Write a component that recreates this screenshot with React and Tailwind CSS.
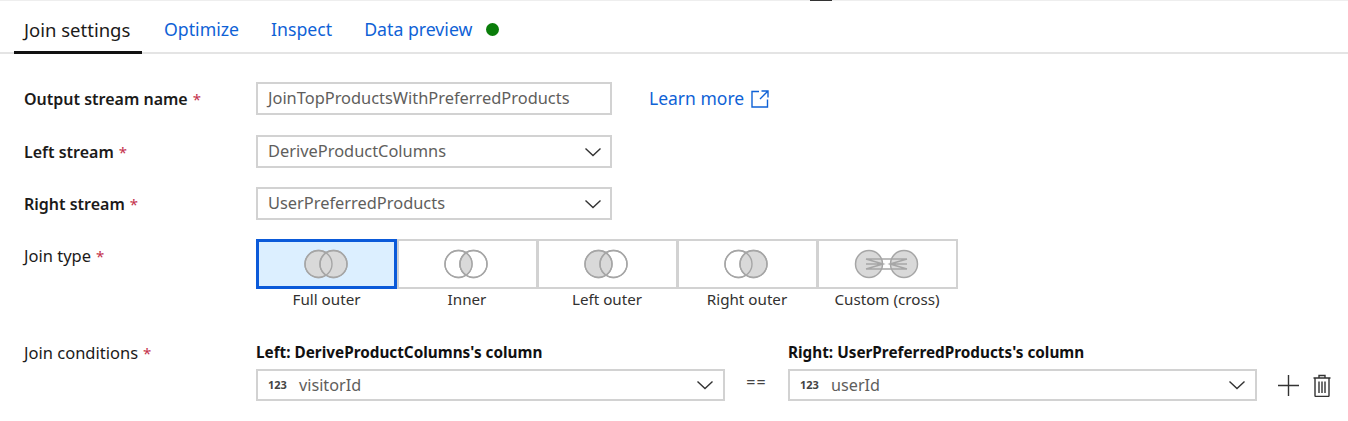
const joinTypes = [
  { label: 'Full outer', kind: 'full', selected: true },
  { label: 'Inner', kind: 'inner' },
  { label: 'Left outer', kind: 'left' },
  { label: 'Right outer', kind: 'right' },
  { label: 'Custom (cross)', kind: 'cross' },
];

const Chevron = ({ className }) => (
  <svg viewBox="0 0 18 10" className={className} fill="none" stroke="#333" strokeWidth="1.4">
    <path d="M1.5 1.5 9 8.5l7.5-7" />
  </svg>
);

const Required = () => <span className="ml-[5px] text-[15px] font-normal text-[#c4314b]">*</span>;

// Venn diagram, circles sit 15px apart in a 60x30 box
const JoinIcon = ({ kind }) => {
  const line = '#a6a6a6';
  const fill = '#d9d9d9';
  if (kind === 'cross') {
    return (
      <svg width="68" height="30" viewBox="0 0 68 30" fill={fill} stroke={line} strokeWidth="1.5">
        <circle cx="16" cy="15" r="13.5" />
        <circle cx="51" cy="15" r="13.5" />
        <path fill="none" d="M13 10h41M13 20h41M13 15h17M37 15h17M13 10 30 15 13 20M54 10 37 15 54 20" />
      </svg>
    );
  }
  const leftFill = kind === 'full' || kind === 'left' ? fill : 'none';
  const rightFill = kind === 'full' || kind === 'right' ? fill : 'none';
  return (
    <svg width="60" height="30" viewBox="0 0 60 30" stroke={line} strokeWidth="1.4" className="mr-[2px]">
      <defs>
        <clipPath id="inner-clip">
          <circle cx="22.5" cy="15" r="13.5" />
        </clipPath>
      </defs>
      <circle cx="22.5" cy="15" r="13.5" fill={leftFill} />
      <circle cx="37.5" cy="15" r="13.5" fill={rightFill} />
      {kind === 'inner' && <circle cx="37.5" cy="15" r="13.5" fill={fill} clipPath="url(#inner-clip)" />}
      <circle cx="22.5" cy="15" r="13.5" fill="none" />
      <circle cx="37.5" cy="15" r="13.5" fill="none" />
    </svg>
  );
};

const Field = ({ value, dropdown }) => (
  <div className="flex h-[33px] w-[356px] items-center justify-between border-2 border-[#d2d2d2] pl-[10px] pr-[8px] text-[16.4px] text-[#605e5c]">
    <span>{value}</span>
    {dropdown && <Chevron className="h-[10px] w-[18px]" />}
  </div>
);

const ColumnSelect = ({ title, value, width }) => (
  <div className="flex flex-col">
    <div className="mb-[5px] h-[24px] text-[15.3px] leading-[24px] font-bold text-[#111]">{title}</div>
    <div className={`flex h-[32px] ${width} items-center border-2 border-[#d2d2d2] pl-[10px] pr-[9px] text-[16.2px] text-[#605e5c]`}>
      <span className="w-[31px] text-[11px] font-bold text-[#444]">123</span>
      <span className="flex-1">{value}</span>
      <Chevron className="h-[10px] w-[18px]" />
    </div>
  </div>
);

const App = () => {
  return (
    <div className="relative h-[421px] w-[1348px] overflow-hidden bg-white font-['Noto_Sans',sans-serif] text-[16.5px] text-[#1b1a19]">
      <div className="absolute left-[810px] top-0 h-px w-[22px] bg-[#333]" />

      {/* Tabs */}
      <div className="flex h-[54px] items-end gap-[12px] border-t border-b-2 border-t-[#eeeeee] border-b-[#e4e4e4] pl-[14px] text-[17.7px]">
        <div className="-mb-[2px] flex h-[52px] w-[128px] items-center border-b-[3px] border-[#111] px-[10px] pt-[6px] text-[18.5px] whitespace-nowrap">Join settings</div>
        <div className="flex h-[50px] items-center px-[10px] pt-[4px] text-[#0f62d6]">Optimize</div>
        <div className="flex h-[50px] items-center px-[10px] pt-[4px] text-[#0f62d6]">Inspect</div>
        <div className="flex h-[50px] items-center px-[10px] pt-[4px] text-[#0f62d6]">
          Data preview
          <span className="ml-[14px] h-[13px] w-[13px] rounded-full bg-[#0a7d0a]" />
        </div>
      </div>

      <div className="flex flex-col pl-[24px] pt-[28px]">
        <div className="flex h-[33px] items-center">
          <div className="w-[232px] text-[16px] font-semibold">Output stream name<Required /></div>
          <Field value="JoinTopProductsWithPreferredProducts" />
          <div className="ml-[37px] flex items-center text-[17.5px] text-[#0f62d6]">
            Learn more
            <svg width="18" height="18" viewBox="0 0 18 18" fill="none" stroke="#0f62d6" strokeWidth="1.4" className="ml-[7px]">
              <path d="M8 1.5H1v15.500h15.500V9.500M10.500 1h6.500v6.500M17 1 9 9" />
            </svg>
          </div>
        </div>

        <div className="mt-[20px] flex h-[33px] items-center">
          <div className="w-[232px] text-[16px] font-semibold">Left stream<Required /></div>
          <Field value="DeriveProductColumns" dropdown />
        </div>

        <div className="mt-[19px] flex h-[33px] items-center">
          <div className="w-[232px] text-[16px] font-semibold">Right stream<Required /></div>
          <Field value="UserPreferredProducts" dropdown />
        </div>

        <div className="mt-[19px] flex">
          <div className="w-[232px] pt-[5px]">Join type<Required /></div>
          <div className="flex">
            {joinTypes.map((type) => (
              <div
                key={type.label}
                className={type.selected ? 'flex w-[141px] flex-col items-center' : 'flex w-[140px] flex-col items-center'}
              >
                <div
                  className={
                    type.selected
                      ? 'flex h-[50px] w-[141px] shrink-0 items-center justify-center border-[3px] border-[#0b5ad9] bg-[#dcefff]'
                      : 'flex h-[50px] w-[141px] shrink-0 items-center justify-center border-2 border-[#d2d2d2]'
                  }
                >
                  <JoinIcon kind={type.kind} />
                </div>
                <div className="-mt-[2px] mb-px h-[24px] text-[15.2px] leading-[24px] text-[#323130]">{type.label}</div>
              </div>
            ))}
          </div>
        </div>

        <div className="mt-[28px] flex">
          <div className="w-[232px] pt-px">Join conditions<Required /></div>
          <ColumnSelect title="Left: DeriveProductColumns's column" value="visitorId" width="w-[469px]" />
          <div className="flex w-[63px] items-end justify-center pb-[7px] text-[16px] tracking-[1px] text-[#444]">==</div>
          <ColumnSelect title="Right: UserPreferredProducts's column" value="userId" width="w-[469px]" />
          <div className="ml-[21px] mt-[29px] flex h-[32px] items-center gap-[14px]">
            <svg width="21" height="21" viewBox="0 0 21 21" stroke="#333" strokeWidth="1.4">
              <path d="M0 10.500h21M10.500 0v21" />
            </svg>
            <svg width="18" height="23" viewBox="0 0 18 23" fill="none" stroke="#333" strokeWidth="1.4">
              <path d="M.5 4h17M6 4V1.500h6V4M2 4v17.500c0 .6.4 1 1 1h12c.6 0 1-.4 1-1V4M6 7.500v11.500M9 7.500v11.500M12 7.500v11.500" />
            </svg>
          </div>
        </div>
      </div>
    </div>
  );
};

export default App;
